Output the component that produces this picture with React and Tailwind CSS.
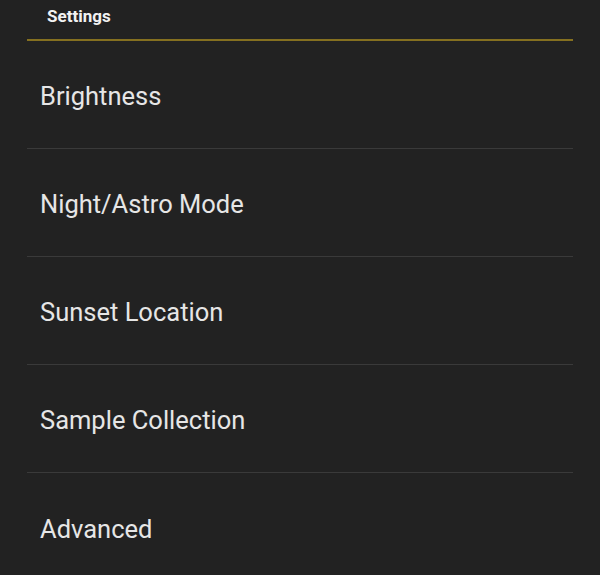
const items = ['Brightness', 'Night/Astro Mode', 'Sunset Location', 'Sample Collection', 'Advanced'];

export default function App() {
  return (
    <div className="h-[575px] w-[600px] overflow-hidden bg-[#222222] px-[27px] font-['Roboto',sans-serif]">
      {/* Header */}
      <div className="flex h-[41px] items-start border-b-2 border-[#857020] pl-[20px] pt-[5px]">
        <span className="text-[17px] font-bold leading-[22px] text-[#f2f2f2]">Settings</span>
      </div>

      {/* List */}
      <ul>
        {items.map((label, i) => (
          <li
            key={label}
            className={`flex h-[108px] items-center pl-[13px] pt-[5px] ${i < items.length - 1 ? 'border-b border-[#3a3a3a]' : ''}`}
          >
            <span className="text-[25.5px] leading-none text-[#e6e6e6]">{label}</span>
          </li>
        ))}
      </ul>
    </div>
  );
}
